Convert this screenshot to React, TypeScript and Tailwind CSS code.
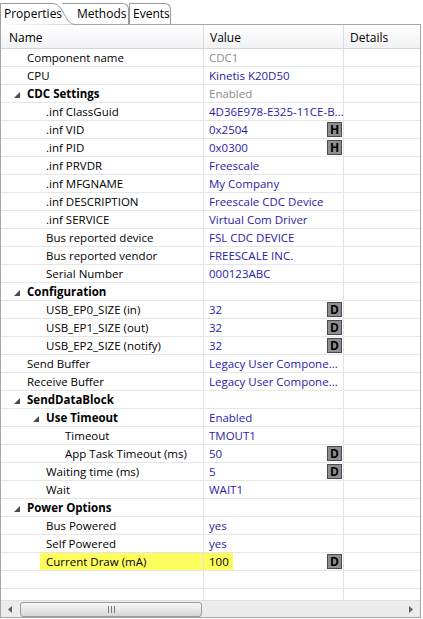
type Row = {
  name: string;
  value?: string;
  level: number;
  group?: boolean;
  btn?: "H" | "D";
  gray?: boolean;
  hl?: boolean;
};

const ROWS: Row[] = [
  { name: "Component name", value: "CDC1", level: 0, gray: true },
  { name: "CPU", value: "Kinetis K20D50", level: 0 },
  { name: "CDC Settings", value: "Enabled", level: 0, group: true, gray: true },
  { name: ".inf ClassGuid", value: "4D36E978-E325-11CE-B...", level: 1 },
  { name: ".inf VID", value: "0x2504", level: 1, btn: "H" },
  { name: ".inf PID", value: "0x0300", level: 1, btn: "H" },
  { name: ".inf PRVDR", value: "Freescale", level: 1 },
  { name: ".inf MFGNAME", value: "My Company", level: 1 },
  { name: ".inf DESCRIPTION", value: "Freescale CDC Device", level: 1 },
  { name: ".inf SERVICE", value: "Virtual Com Driver", level: 1 },
  { name: "Bus reported device", value: "FSL CDC DEVICE", level: 1 },
  { name: "Bus reported vendor", value: "FREESCALE INC.", level: 1 },
  { name: "Serial Number", value: "000123ABC", level: 1 },
  { name: "Configuration", level: 0, group: true },
  { name: "USB_EP0_SIZE (in)", value: "32", level: 1, btn: "D" },
  { name: "USB_EP1_SIZE (out)", value: "32", level: 1, btn: "D" },
  { name: "USB_EP2_SIZE (notify)", value: "32", level: 1, btn: "D" },
  { name: "Send Buffer", value: "Legacy User Compone...", level: 0 },
  { name: "Receive Buffer", value: "Legacy User Compone...", level: 0 },
  { name: "SendDataBlock", level: 0, group: true },
  { name: "Use Timeout", value: "Enabled", level: 1, group: true },
  { name: "Timeout", value: "TMOUT1", level: 2 },
  { name: "App Task Timeout (ms)", value: "50", level: 2, btn: "D" },
  { name: "Waiting time (ms)", value: "5", level: 1, btn: "D" },
  { name: "Wait", value: "WAIT1", level: 1 },
  { name: "Power Options", level: 0, group: true },
  { name: "Bus Powered", value: "yes", level: 1 },
  { name: "Self Powered", value: "yes", level: 1 },
  { name: "Current Draw (mA)", value: "100", level: 1, btn: "D", hl: true },
];

const indent = ["pl-[26px]", "pl-[45px]", "pl-[64px]"];
const arrowPos = ["left-[13px]", "left-[32px]", "left-[51px]"];

const Expanded = ({ pos }: { pos: string }) => (
  <svg className={`absolute top-[7px] ${pos}`} width="6" height="6" viewBox="0 0 6 6">
    <polygon points="6,0 6,6 0,6" fill="#4a4a4a" />
  </svg>
);

const PropRow = ({ row }: { row: Row }) => (
  <div className="grid grid-cols-[203px_140px_1fr] h-[18px] border-b border-[#e6e6e6] whitespace-nowrap">
    <div className={`relative overflow-hidden border-r border-[#e2e2e2] ${indent[row.level]}`}>
      {row.group && <Expanded pos={arrowPos[row.level]} />}
      <span
        className={`inline-block h-[17px] leading-[18px] ${row.group ? "font-bold" : ""} ${
          row.hl ? "bg-[#fdfd5e] -ml-[6px] pl-[6px] w-[calc(100%+6px)]" : ""
        }`}
      >
        {row.name}
      </span>
    </div>
    <div className="relative overflow-hidden border-r border-[#e2e2e2] pl-[5px]">
      {row.value && (
        <span
          className={`inline-block h-[17px] leading-[18px] ${row.gray ? "text-[#8c8c8c]" : "text-[#2a1ba6]"} ${
            row.hl ? "bg-[#fdfd5e] text-black -ml-[5px] pl-[5px] pr-[4px]" : ""
          }`}
        >
          {row.value}
        </span>
      )}
      {row.btn && (
        <span className="absolute right-[1px] top-[1px] w-[15px] h-[15px] bg-[#8f8f8f] border border-[#4a4a4a] text-black font-bold text-[12px] leading-[13px] text-center">
          {row.btn}
        </span>
      )}
    </div>
    <div />
  </div>
);

const Tabs = () => (
  <div className="relative h-[24px] text-[12px] text-black">
    <div className="absolute left-[129px] top-[3px] w-[42px] h-[21px] border border-b-0 border-[#9a9a9a] rounded-tr-[6px] bg-white pl-[3px] leading-[19px]">
      Events
    </div>
    <div className="absolute left-[62px] top-[3px] w-[67px] h-[21px] border-t border-r border-[#9a9a9a] rounded-tr-[6px] bg-white pl-[15px] leading-[19px]">
      Methods
    </div>
    <svg className="absolute left-0 top-[3px]" width="76" height="22" viewBox="0 0 76 22">
      <path d="M0.5,22 L0.5,0.5 L52,0.5 C58,0.5 60,4 63,9 C66,15 69,21 75,21.5" fill="white" stroke="#9a9a9a" />
    </svg>
    <div className="absolute left-[4px] top-[4px] leading-[19px]">Properties</div>
  </div>
);

const ScrollBar = () => (
  <div className="flex items-center h-[17px] bg-[#ececec] border-t border-[#e0e0e0]">
    <div className="w-[18px] flex justify-center">
      <svg width="4" height="7" viewBox="0 0 4 7">
        <polygon points="4,0 4,7 0,3.5" fill="#606060" />
      </svg>
    </div>
    <div className="ml-[1px] w-[182px] h-[15px] rounded-[3px] border border-[#9c9c9c] bg-gradient-to-b from-[#f7f7f7] via-[#e8e8e8] to-[#d6d6d6] flex items-center justify-center gap-[2px]">
      <span className="w-px h-[7px] bg-[#7a7a7a]" />
      <span className="w-px h-[7px] bg-[#7a7a7a]" />
      <span className="w-px h-[7px] bg-[#7a7a7a]" />
    </div>
    <div className="flex-1" />
    <div className="w-[18px] flex justify-center">
      <svg width="4" height="7" viewBox="0 0 4 7">
        <polygon points="0,0 0,7 4,3.5" fill="#606060" />
      </svg>
    </div>
  </div>
);

export default function App() {
  return (
    <div className="w-[423px] h-[619px] bg-white overflow-hidden font-['Open_Sans',sans-serif] text-[11.5px] text-black">
      <Tabs />
      <div className="w-[421px] h-[594px] border border-[#a5a5a5] flex flex-col">
        <div className="grid grid-cols-[203px_140px_1fr] h-[24px] border-b border-[#d5d5d5] bg-gradient-to-b from-white to-[#f1f2f4] leading-[26px] text-[12px]">
          <div className="border-r border-[#dcdcdc] pl-[8px]">Name</div>
          <div className="border-r border-[#dcdcdc] pl-[6px]">Value</div>
          <div className="pl-[6px]">Details</div>
        </div>
        {ROWS.map((r, i) => (
          <PropRow key={i} row={r} />
        ))}
        <div className="flex-1 overflow-hidden">
          <PropRow row={{ name: "", level: 0 }} />
          <PropRow row={{ name: "", level: 0 }} />
        </div>
        <ScrollBar />
      </div>
    </div>
  );
}
